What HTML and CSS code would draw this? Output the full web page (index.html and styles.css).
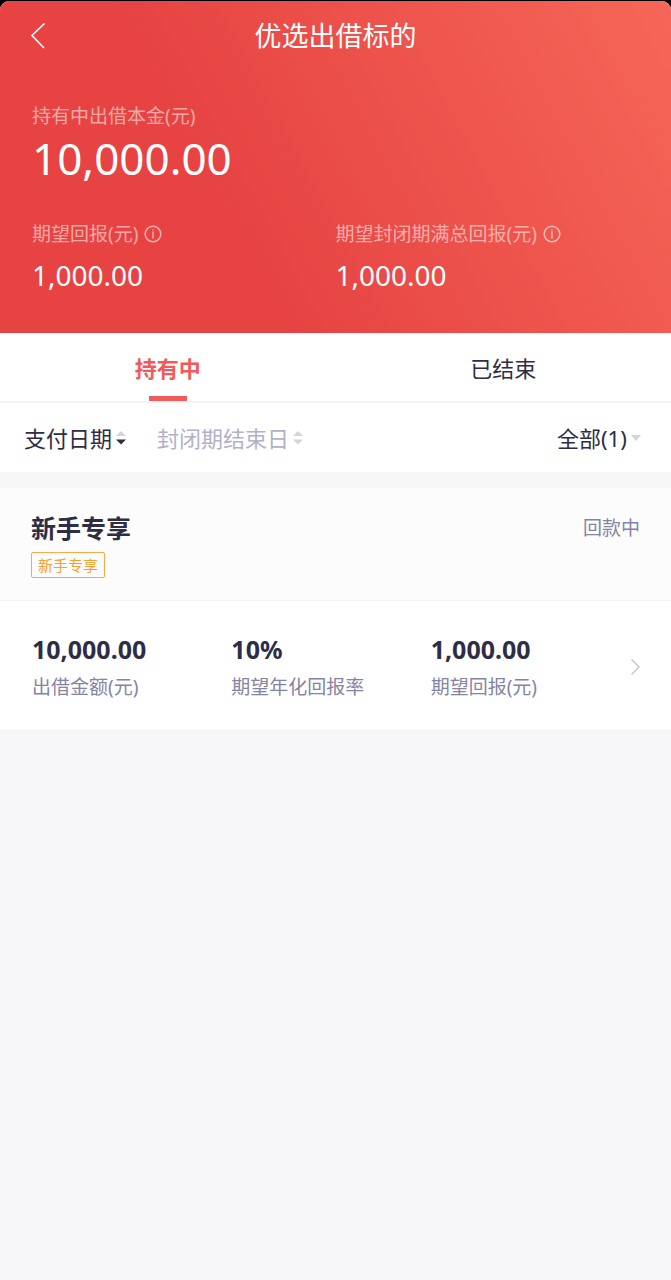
FILE: index.html
```
<!DOCTYPE html>
<html lang="zh-CN">
<head>
    <meta charset="UTF-8">
    <meta name="viewport" content="width=device-width, initial-scale=1.0">
    <title>优选出借标的</title>
    <link rel="stylesheet" href="styles.css">
</head>
<body>
    <div class="screen">
        <header class="hero">
            <nav class="nav-bar">
                <button class="nav-back" type="button" aria-label="返回">
                    <svg width="16" height="28" viewBox="0 0 16 28" fill="none">
                        <path d="M14.5 1.5L2 13.5L14 26" stroke="currentColor" stroke-width="1.6"/>
                    </svg>
                </button>
                <h1 class="nav-title">优选出借标的</h1>
            </nav>

            <div class="total">
                <div class="hero-label">持有中出借本金(元)</div>
                <div class="total-value">10,000.00</div>
            </div>

            <div class="returns">
                <div class="return-item">
                    <div class="hero-label">
                        <span>期望回报(元)</span>
                        <button class="info-btn" type="button" aria-label="说明">
                            <svg width="18" height="18" viewBox="0 0 18 18" fill="none" stroke="currentColor">
                                <circle cx="9" cy="9" r="7.8" stroke-width="1.5"/>
                                <path d="M9 6.6V13.6M9 4.4V5.6" stroke-width="1.5"/>
                            </svg>
                        </button>
                    </div>
                    <div class="return-value">1,000.00</div>
                </div>
                <div class="return-item">
                    <div class="hero-label">
                        <span>期望封闭期满总回报(元)</span>
                        <button class="info-btn" type="button" aria-label="说明">
                            <svg width="18" height="18" viewBox="0 0 18 18" fill="none" stroke="currentColor">
                                <circle cx="9" cy="9" r="7.8" stroke-width="1.5"/>
                                <path d="M9 6.6V13.6M9 4.4V5.6" stroke-width="1.5"/>
                            </svg>
                        </button>
                    </div>
                    <div class="return-value">1,000.00</div>
                </div>
            </div>
        </header>

        <div class="tabs" role="tablist">
            <button class="tab tab-active" type="button" role="tab" aria-selected="true">持有中</button>
            <button class="tab" type="button" role="tab" aria-selected="false">已结束</button>
        </div>

        <div class="filters">
            <button class="sort sort-active" type="button">
                <span>支付日期</span>
                <svg class="sort-icon" width="12" height="16" viewBox="0 0 12 16">
                    <path class="arrow-up" d="M6 1L11 6H1Z"/>
                    <path class="arrow-down" d="M1 9.5H11L6 14.5Z"/>
                </svg>
            </button>
            <button class="sort" type="button">
                <span>封闭期结束日</span>
                <svg class="sort-icon" width="12" height="16" viewBox="0 0 12 16">
                    <path class="arrow-up" d="M6 1L11 6H1Z"/>
                    <path class="arrow-down" d="M1 9.5H11L6 14.5Z"/>
                </svg>
            </button>
            <div class="filter-type">
                <select class="type-select" aria-label="类型">
                    <option>全部(1)</option>
                </select>
                <svg class="type-arrow" width="10" height="6" viewBox="0 0 10 6">
                    <path d="M0 0H10L5 6Z"/>
                </svg>
            </div>
        </div>

        <main class="list">
            <article class="card">
                <div class="card-header">
                    <div>
                        <h2 class="card-title">新手专享</h2>
                        <span class="tag">新手专享</span>
                    </div>
                    <span class="card-status">回款中</span>
                </div>
                <a href="#" class="card-body">
                    <div class="stat">
                        <div class="stat-value">10,000.00</div>
                        <div class="stat-label">出借金额(元)</div>
                    </div>
                    <div class="stat">
                        <div class="stat-value">10%</div>
                        <div class="stat-label">期望年化回报率</div>
                    </div>
                    <div class="stat">
                        <div class="stat-value">1,000.00</div>
                        <div class="stat-label">期望回报(元)</div>
                    </div>
                    <svg class="card-arrow" width="10" height="18" viewBox="0 0 10 18" fill="none">
                        <path d="M1.5 1.5L9 9L1.5 16.5" stroke="currentColor" stroke-width="1.4"/>
                    </svg>
                </a>
            </article>
        </main>
    </div>
</body>
</html>
```
FILE: styles.css
```
* {
    margin: 0;
    padding: 0;
    box-sizing: border-box;
}

body {
    font-family: "Noto Sans", "Noto Sans CJK SC", sans-serif;
    background: #000000;
    color: #2d2d46;
    padding-top: 1px;
}

button,
select {
    font-family: inherit;
    color: inherit;
    background: none;
    border: none;
    cursor: pointer;
}

svg {
    display: block;
    flex-shrink: 0;
}

.screen {
    min-height: calc(100vh - 1px);
    background: #f7f7f9;
    border-radius: 9px 9px 0 0;
    overflow: hidden;
}

/* Header */
.hero {
    color: #ffffff;
    background: linear-gradient(62deg, #e64342 0%, #e64342 34%, #f66658 100%);
    padding-bottom: 38px;
}

.nav-bar {
    display: grid;
    grid-template-columns: 80px 1fr 80px;
    align-items: center;
    height: 70px;
}

.nav-back {
    justify-self: start;
    padding: 8px 30px;
}

.nav-title {
    font-size: 27px;
    line-height: 40px;
    font-weight: 400;
    text-align: center;
}

.total {
    padding: 31px 32px 0;
}

.hero-label {
    display: flex;
    align-items: center;
    gap: 6px;
    font-size: 19px;
    line-height: 28px;
    color: rgba(255, 255, 255, 0.55);
}

.total-value {
    font-size: 44px;
    line-height: 56px;
}

.info-btn {
    color: rgba(255, 255, 255, 0.6);
}

.returns {
    display: grid;
    grid-template-columns: 1fr 1fr;
    padding: 34px 32px 0;
}

.return-item .hero-label {
    margin-bottom: 7px;
}

.return-value {
    font-size: 28px;
    line-height: 40px;
}

/* Tabs */
.tabs {
    display: flex;
    background: #ffffff;
    border-bottom: 2px solid #f3f3f4;
}

.tab {
    position: relative;
    flex: 1;
    font-size: 22px;
    line-height: 32px;
    padding: 19px 0 17px;
}

.tab-active {
    color: #f05a5a;
    font-weight: 700;
}

.tab-active::after {
    content: "";
    position: absolute;
    left: 50%;
    bottom: 0;
    width: 38px;
    height: 5px;
    margin-left: -19px;
    background: #f05a5a;
}

/* Sort and filter */
.filters {
    display: flex;
    align-items: center;
    gap: 30px;
    height: 69px;
    padding: 0 30px 0 24px;
    background: #ffffff;
}

.sort {
    display: flex;
    align-items: center;
    gap: 3px;
    font-size: 22px;
    line-height: 32px;
    color: #b1b1c8;
}

.sort-icon {
    fill: #d4d4dc;
}

.sort-active {
    color: #2d2d46;
}

.sort-active .arrow-down {
    fill: #2d2d46;
}

.filter-type {
    display: flex;
    align-items: center;
    gap: 4px;
    margin-left: auto;
}

.type-select {
    appearance: none;
    font-size: 22px;
    line-height: 32px;
}

.type-arrow {
    fill: #d4d4dc;
}

/* List */
.list {
    padding-top: 16px;
}

.card {
    background: #ffffff;
}

.card-header {
    display: flex;
    justify-content: space-between;
    align-items: flex-start;
    padding: 22px 31px;
    background: #fcfcfc;
    border-bottom: 1px solid #f3f3f4;
}

.card-title {
    font-size: 25px;
    line-height: 36px;
    font-weight: 700;
    margin-bottom: 6px;
}

.tag {
    display: block;
    width: fit-content;
    padding: 1px 6px 0;
    font-size: 15px;
    line-height: 23px;
    color: #f9a02c;
    border: 1px solid #f9a945;
    border-radius: 2px;
}

.card-status {
    font-size: 19px;
    line-height: 36px;
    color: #8484a4;
}

.card-body {
    display: grid;
    grid-template-columns: 1fr 1fr 1fr 10px;
    align-items: center;
    padding: 30px 31px 26px 32px;
    color: inherit;
    text-decoration: none;
}

.stat-value {
    font-size: 25px;
    line-height: 36px;
    font-weight: 700;
    margin-bottom: 4px;
}

.stat-label {
    font-size: 19px;
    line-height: 32px;
    color: #8484a4;
    white-space: nowrap;
}

.card-arrow {
    color: #c4c4cc;
}
```
